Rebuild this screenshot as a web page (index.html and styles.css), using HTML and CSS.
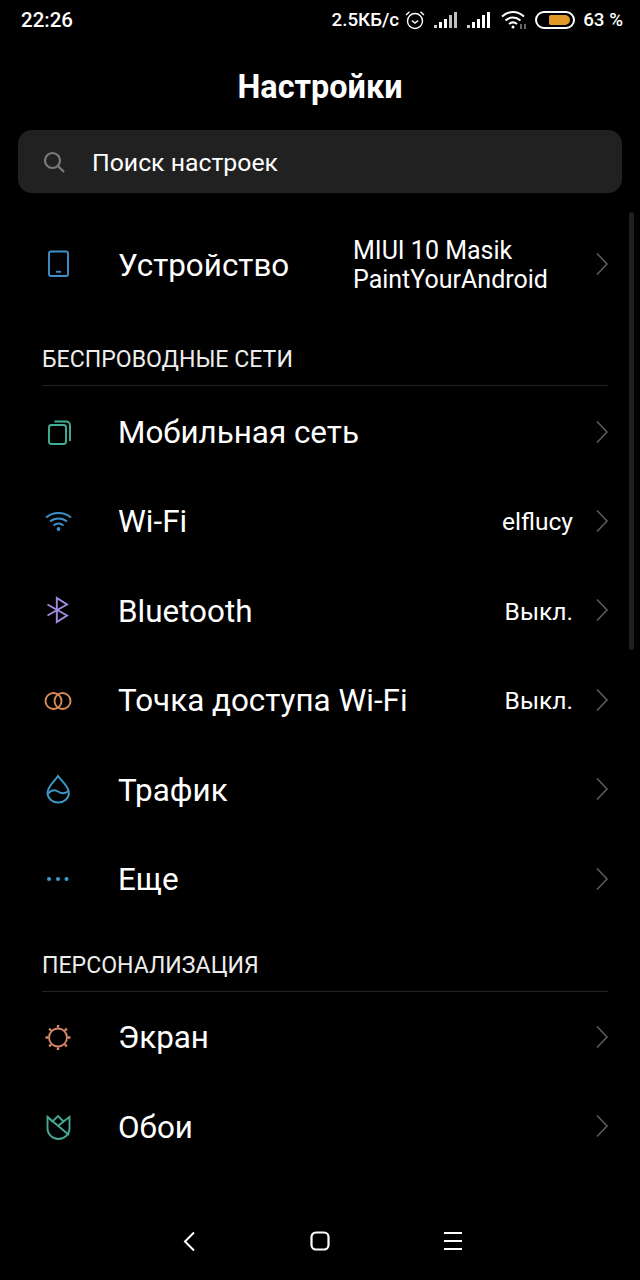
FILE: index.html
```html
<!DOCTYPE html>
<html lang="ru">
<head>
    <meta charset="UTF-8">
    <meta name="viewport" content="width=device-width, initial-scale=1.0">
    <title>Настройки</title>
    <link rel="stylesheet" href="styles.css">
</head>
<body>
    <div class="status-bar">
        <span class="status-time">22:26</span>
        <div class="status-right">
            <span class="status-speed">2.5КБ/с</span>
            <svg class="status-alarm" width="20" height="20" viewBox="0 0 20 20" fill="none" stroke="#fff" stroke-width="1.4">
                <circle cx="10" cy="11" r="7.5"/>
                <path d="M6.800 10.500l3.200 2.500 3.200-2.500"/>
                <path d="M1 5L4.500 1.800M19 5L15.500 1.800"/>
            </svg>
            <svg class="status-signal" width="25" height="20" viewBox="0 0 25 20" fill="#fff">
                <rect x="0" y="15" width="3" height="3" opacity=".8"/>
                <rect x="5" y="12" width="3" height="6"/>
                <rect x="10" y="9" width="3" height="9"/>
                <rect x="15" y="5" width="3" height="13" opacity=".75"/>
                <rect x="20" y="2" width="3" height="16" opacity=".75"/>
            </svg>
            <svg class="status-signal" width="25" height="20" viewBox="0 0 25 20" fill="#fff">
                <rect x="0" y="15" width="3" height="3" opacity=".8"/>
                <rect x="5" y="12" width="3" height="6"/>
                <rect x="10" y="9" width="3" height="9"/>
                <rect x="15" y="5" width="3" height="13"/>
                <rect x="20" y="2" width="3" height="16"/>
            </svg>
            <svg class="status-wifi" width="26" height="20" viewBox="0 0 26 20" fill="none" stroke="#fff" stroke-width="2">
                <path d="M1 6.500C7.500 .5 16.500 .5 23 6.500"/>
                <path d="M4.500 10.500C9 6.500 15 6.500 19.500 10.500"/>
                <path d="M8 14C10.500 12 13.500 12 16 14"/>
                <circle cx="12" cy="17" r="1.500" fill="#fff" stroke="none"/>
                <path d="M20 14v5M24 14v5" stroke-width="1" opacity=".8"/>
            </svg>
            <div class="battery"><div class="battery-level"></div></div>
            <span class="status-percent">63 %</span>
        </div>
    </div>

    <h1 class="page-title">Настройки</h1>

    <div class="search-box">
        <svg width="24" height="24" viewBox="0 0 24 24" fill="none" stroke="#7a7a7a" stroke-width="2.200">
            <circle cx="10.500" cy="10.500" r="7.500"/>
            <path d="M16 16l6 6"/>
        </svg>
        <span class="search-text">Поиск настроек</span>
    </div>

    <div class="settings-list">
        <div class="row row-device">
            <svg class="row-icon" width="32" height="32" viewBox="0 0 32 32" fill="none" stroke="#3d8fc9" stroke-width="1.900">
                <rect x="7" y="2.500" width="19" height="24.500" rx="2"/>
                <path d="M14 22.800h5"/>
            </svg>
            <span class="row-title">Устройство</span>
            <span class="row-value row-value-multi">MIUI 10 Masik<br>PaintYourAndroid</span>
            <svg class="row-arrow" width="14" height="24" viewBox="0 0 14 24" fill="none" stroke="#5c5c5c" stroke-width="1.600"><path d="M2 1.500l10 10.500L2 22.500"/></svg>
        </div>

        <div class="section-head">БЕСПРОВОДНЫЕ СЕТИ</div>

        <div class="row">
            <svg class="row-icon" width="32" height="32" viewBox="0 0 32 32" fill="none" stroke="#3fb096" stroke-width="1.900">
                <rect x="7" y="8" width="17" height="19" rx="2.500"/>
                <path d="M12.500 4.500H24a4 4 0 0 1 4 4V24"/>
            </svg>
            <span class="row-title">Мобильная сеть</span>
            <svg class="row-arrow" width="14" height="24" viewBox="0 0 14 24" fill="none" stroke="#5c5c5c" stroke-width="1.600"><path d="M2 1.500l10 10.500L2 22.500"/></svg>
        </div>
        <div class="row">
            <svg class="row-icon" width="32" height="32" viewBox="0 0 32 32" fill="none" stroke="#3d8fc9" stroke-width="1.900">
                <path d="M4 11.500C11 5.500 22 5.500 29 11.500"/>
                <path d="M8 15.500C13 11.500 20 11.500 25 15.500"/>
                <path d="M11.500 19.500C14.500 17.200 18.500 17.200 21.500 19.500"/>
                <circle cx="16.500" cy="23" r="1.900" fill="#3d8fc9" stroke="none"/>
            </svg>
            <span class="row-title">Wi-Fi</span>
            <span class="row-value">elflucy</span>
            <svg class="row-arrow" width="14" height="24" viewBox="0 0 14 24" fill="none" stroke="#5c5c5c" stroke-width="1.600"><path d="M2 1.500l10 10.500L2 22.500"/></svg>
        </div>
        <div class="row">
            <svg class="row-icon" width="32" height="32" viewBox="0 0 32 32" fill="none" stroke="#a58be0" stroke-width="1.900">
                <path d="M5.500 9.500L25 20.500 14.800 27V3L25 9.500 5.500 20.500"/>
            </svg>
            <span class="row-title">Bluetooth</span>
            <span class="row-value">Выкл.</span>
            <svg class="row-arrow" width="14" height="24" viewBox="0 0 14 24" fill="none" stroke="#5c5c5c" stroke-width="1.600"><path d="M2 1.500l10 10.500L2 22.500"/></svg>
        </div>
        <div class="row">
            <svg class="row-icon" width="32" height="32" viewBox="0 0 32 32" fill="none" stroke="#d98a58" stroke-width="1.900">
                <circle cx="11.500" cy="16" r="8"/>
                <circle cx="20.500" cy="16" r="8"/>
            </svg>
            <span class="row-title">Точка доступа Wi-Fi</span>
            <span class="row-value">Выкл.</span>
            <svg class="row-arrow" width="14" height="24" viewBox="0 0 14 24" fill="none" stroke="#5c5c5c" stroke-width="1.600"><path d="M2 1.500l10 10.500L2 22.500"/></svg>
        </div>
        <div class="row">
            <svg class="row-icon" width="32" height="32" viewBox="0 0 32 32" fill="none" stroke="#3d9ac9" stroke-width="1.900">
                <path d="M16 2C12 8 5.500 12 5.500 19a10.700 9.500 0 0 0 21.400 0C26.900 12 20 8 16 2z"/>
                <path d="M6 19.500C10 15 13 15.500 16 17.500s7 2.500 10.500 -0.500"/>
            </svg>
            <span class="row-title">Трафик</span>
            <svg class="row-arrow" width="14" height="24" viewBox="0 0 14 24" fill="none" stroke="#5c5c5c" stroke-width="1.600"><path d="M2 1.500l10 10.500L2 22.500"/></svg>
        </div>
        <div class="row">
            <svg class="row-icon" width="32" height="32" viewBox="0 0 32 32" fill="#3d9ac9">
                <circle cx="7" cy="15" r="2"/>
                <circle cx="16" cy="15" r="2"/>
                <circle cx="24.500" cy="15" r="2"/>
            </svg>
            <span class="row-title">Еще</span>
            <svg class="row-arrow" width="14" height="24" viewBox="0 0 14 24" fill="none" stroke="#5c5c5c" stroke-width="1.600"><path d="M2 1.500l10 10.500L2 22.500"/></svg>
        </div>

        <div class="section-head">ПЕРСОНАЛИЗАЦИЯ</div>

        <div class="row">
            <svg class="row-icon" width="32" height="32" viewBox="0 0 32 32" fill="none" stroke="#d98a68" stroke-width="1.900">
                <circle cx="16" cy="15.500" r="9"/>
                <path d="M16 3v2.500M16 25.500V28M3.500 15.500H6M26 15.500h2.500M7.200 6.700l1.800 1.800M23 22.500l1.800 1.800M7.200 24.300L9 22.500M23 8.500l1.800-1.800" stroke-width="2.400"/>
            </svg>
            <span class="row-title">Экран</span>
            <svg class="row-arrow" width="14" height="24" viewBox="0 0 14 24" fill="none" stroke="#5c5c5c" stroke-width="1.600"><path d="M2 1.500l10 10.500L2 22.500"/></svg>
        </div>
        <div class="row">
            <svg class="row-icon" width="32" height="32" viewBox="0 0 32 32" fill="none" stroke="#45a893" stroke-width="1.900">
                <path d="M5.500 6V17.500a11 10.500 0 0 0 22 0V6L21.500 10.500 16 5 10.500 10.500z"/>
                <path d="M5.500 6L27 24M16 15l5.500-4.500"/>
            </svg>
            <span class="row-title">Обои</span>
            <svg class="row-arrow" width="14" height="24" viewBox="0 0 14 24" fill="none" stroke="#5c5c5c" stroke-width="1.600"><path d="M2 1.500l10 10.500L2 22.500"/></svg>
        </div>
    </div>

    <div class="scrollbar"></div>

    <div class="nav-bar">
        <svg width="24" height="28" viewBox="0 0 24 28" fill="none" stroke="#fff" stroke-width="2"><path d="M19 5.500L10 14.500l9 9"/></svg>
        <svg width="24" height="28" viewBox="0 0 24 28" fill="none" stroke="#fff" stroke-width="2.200"><rect x="3.500" y="5.500" width="17" height="17" rx="4.500"/></svg>
        <svg width="24" height="28" viewBox="0 0 24 28" fill="none" stroke="#fff" stroke-width="2"><path d="M3 6h18M3 14h18M3 22h18"/></svg>
    </div>
</body>
</html>
```
FILE: styles.css
```css
* {
    box-sizing: border-box;
}

body {
    font-family: Roboto, sans-serif;
    margin: 0;
    width: 640px;
    height: 1280px;
    overflow: hidden;
    position: relative;
    background-color: #000;
    color: #fff;
    display: flex;
    flex-direction: column;
}

/* Статус-бар */
.status-bar {
    height: 40px;
    padding: 0 17px 0 21px;
    display: flex;
    align-items: center;
    justify-content: space-between;
    font-size: 18.8px;
    font-weight: 500;
}

.status-time {
    font-size: 20.5px;
}

.status-right {
    display: flex;
    align-items: center;
}

.status-alarm {
    margin-left: 6px;
}

.status-signal {
    margin-left: 9px;
}

.status-signal + .status-signal {
    margin-left: 8px;
}

.status-wifi {
    margin-left: 9px;
}

.battery {
    width: 40px;
    height: 18px;
    margin-left: 8px;
    padding: 2px 3px;
    border: 2px solid #fff;
    border-radius: 9px;
    display: flex;
    justify-content: flex-end;
}

.battery-level {
    width: 21px;
    background-color: #e29a26;
    border-radius: 2px 6px 6px 2px;
}

.status-percent {
    margin-left: 8px;
}

.page-title {
    margin: 0;
    height: 90px;
    padding-top: 27px;
    line-height: 40px;
    font-size: 32.4px;
    font-weight: 700;
    text-align: center;
}

.search-box {
    height: 63px;
    margin: 0 18px;
    padding: 0 24px;
    background-color: #212121;
    border-radius: 14px;
    display: flex;
    align-items: center;
    gap: 26px;
    flex-shrink: 0;
}

.search-text {
    font-size: 24.8px;
    margin-top: 2px;
}

.settings-list {
    margin-top: 27.5px;
}

.row {
    height: 89.4px;
    padding: 0 31px 0 42px;
    display: flex;
    align-items: center;
}

.row-device {
    margin-bottom: 8px;
}

.row-icon {
    flex-shrink: 0;
}

.row-title {
    margin-left: 44px;
    font-size: 31.4px;
    flex-grow: 1;
}

.row-value {
    font-size: 24.6px;
    margin-right: 22px;
}

.row-value-multi {
    line-height: 29px;
    width: 219px;
    margin-right: 23px;
    font-size: 25px;
}

.row-arrow {
    flex-shrink: 0;
    margin-top: -2px;
}

.section-head {
    margin: 0 32px 1px 42px;
    padding: 28px 0 11px;
    line-height: 28px;
    font-size: 23.1px;
    color: #ededed;
    border-bottom: 1px solid #222;
}

.row-device + .section-head {
    margin-bottom: 2px;
}

/* Полоса прокрутки поверх списка */
.scrollbar {
    position: absolute;
    left: 629px;
    top: 212px;
    width: 5px;
    height: 438px;
    background-color: #1f1f1f;
    border-radius: 3px;
}

.nav-bar {
    position: absolute;
    left: 0;
    right: 0;
    bottom: 25px;
    display: flex;
    justify-content: center;
    gap: 109px;
}
```
